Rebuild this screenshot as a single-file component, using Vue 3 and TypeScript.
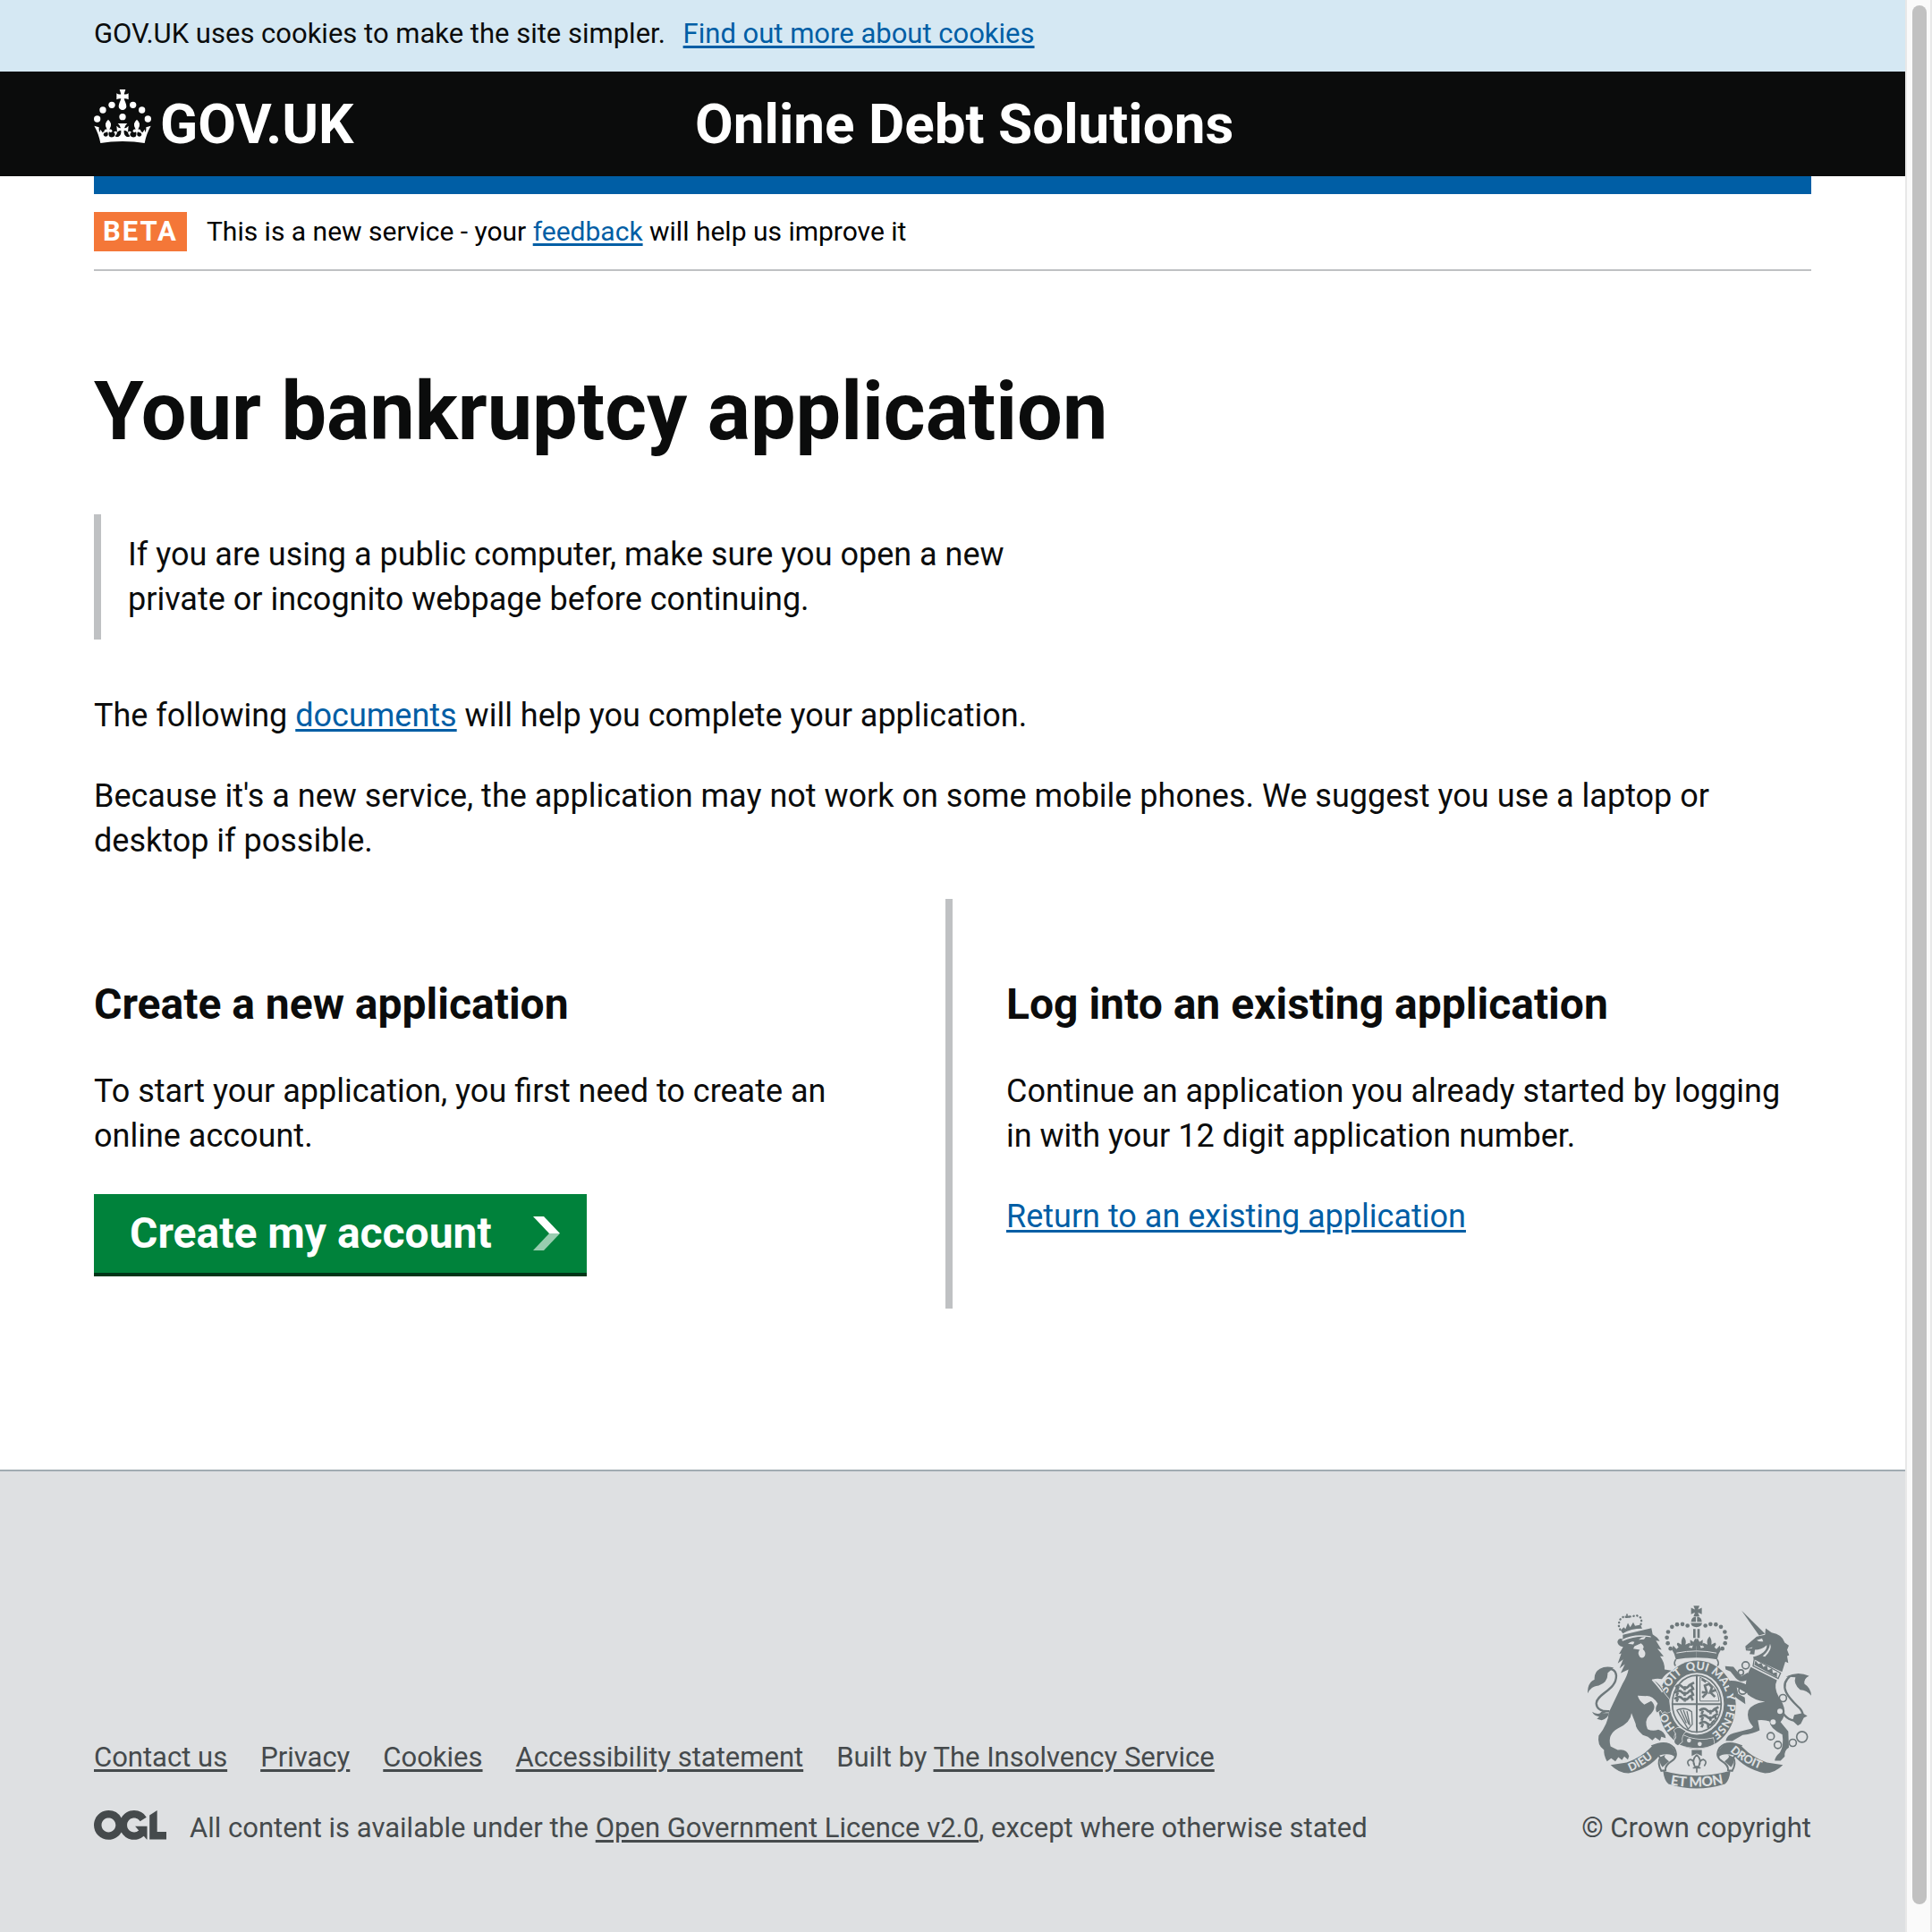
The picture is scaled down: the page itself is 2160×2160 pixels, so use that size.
<script setup lang="ts">
interface FooterLink {
  label: string
  href: string
}

interface Dot {
  x: number
  y: number
  r: number
}

const footerLinks: FooterLink[] = [
  { label: 'Contact us', href: '#contact' },
  { label: 'Privacy', href: '#privacy' },
  { label: 'Cookies', href: '#cookies' },
  { label: 'Accessibility statement', href: '#accessibility' },
]

// Pearls on the arches of the crown in the coat of arms (left half, mirrored for the right)
const pearls: Dot[] = [
  { x: 323, y: 188, r: 7 },
  { x: 314, y: 170, r: 7 },
  { x: 311, y: 151, r: 7 },
  { x: 315, y: 132, r: 7 },
  { x: 328, y: 115, r: 7 },
  { x: 345, y: 107, r: 7 },
  { x: 363, y: 106, r: 7 },
  { x: 380, y: 111, r: 7 },
]

const chainRings: Dot[] = [
  { x: 575, y: 244, r: 12 },
  { x: 559, y: 268, r: 9 },
  { x: 565, y: 328, r: 13 },
  { x: 700, y: 354, r: 12 },
  { x: 659, y: 482, r: 12 },
  { x: 683, y: 511, r: 12 },
  { x: 733, y: 504, r: 12 },
  { x: 764, y: 484, r: 18 },
]
</script>

<template>
  <div class="window">
    <div class="page">
      <div class="cookie-bar">
        <p class="container">
          GOV.UK uses cookies to make the site simpler.
          <a class="cookie-link" href="#cookies">Find out more about cookies</a>
        </p>
      </div>

      <header class="header">
        <div class="container header-grid">
          <a class="brand" href="#home">
            <svg class="brand-crown" viewBox="45 30 192 180" aria-hidden="true">
              <path d="M131 30H151L146 46Q154 48 161 43V64Q154 59 146 61C149 71 154 79 154 87A13 12 0 0 1 128 87C128 79 133 71 136 61Q128 59 121 64V43Q128 48 136 46Z" />
              <circle cx="75" cy="99" r="11" />
              <circle cx="105" cy="82" r="11" />
              <circle cx="176" cy="82" r="11" />
              <circle cx="206" cy="99" r="11" />
              <circle cx="56" cy="129" r="11" />
              <circle cx="226" cy="129" r="11" />
              <circle cx="141" cy="122" r="11" />
              <g id="crown-half">
                <path d="M141 204Q100 204 67 210Q61 178 46 152L62 157Q60 167 65 174L67 164L74 175Q81 168 86 174Q77 174 77 183Q81 190 89 187Q95 183 90 172Q85 176 79 171Q80 162 89 164Q82 153 84 145Q87 136 93 131Q99 136 102 145Q104 153 97 164Q106 162 107 171Q101 176 96 172Q92 182 98 189Q109 193 115 185Q118 177 111 174Q117 167 123 173L121 152Q128 160 135 160Q134 151 125 144H141Z" />
              </g>
              <use href="#crown-half" transform="translate(282 0) scale(-1 1)" />
              <path class="cutout" d="M123 173Q129 167 136 167Q138 182 128 188Q119 191 116 187Q122 182 123 173ZM159 173Q153 167 146 167Q144 182 154 188Q163 191 166 187Q160 182 159 173Z" />
            </svg>
            <span>GOV.UK</span>
          </a>
          <a class="service-name" href="#service">Online Debt Solutions</a>
        </div>
      </header>

      <div class="container">
        <div class="blue-bar"></div>
        <div class="phase">
          <strong class="phase-tag">BETA</strong>
          <span>This is a new service - your <a href="#feedback">feedback</a> will help us improve it</span>
        </div>
      </div>

      <main class="container main">
        <h1>Your bankruptcy application</h1>
        <p class="inset">
          If you are using a public computer, make sure you open a new private or incognito webpage before
          continuing.
        </p>
        <p>The following <a href="#documents">documents</a> will help you complete your application.</p>
        <p>
          Because it's a new service, the application may not work on some mobile phones. We suggest you use a
          laptop or desktop if possible.
        </p>

        <div class="columns">
          <section class="column column-left">
            <h2>Create a new application</h2>
            <p>To start your application, you first need to create an online account.</p>
            <button type="button" class="start-button">
              Create my account
              <svg class="chevron" viewBox="0 0 30 38" aria-hidden="true">
                <path d="M0 0H12L30 19H18Z" fill="#fff" />
                <path d="M18 19H30L12 38H0Z" fill="#99cdb0" />
              </svg>
            </button>
          </section>
          <section class="column column-right">
            <h2>Log into an existing application</h2>
            <p>Continue an application you already started by logging in with your 12 digit application number.</p>
            <p><a href="#return">Return to an existing application</a></p>
          </section>
        </div>
      </main>

      <footer class="footer">
        <div class="container footer-row">
          <div class="footer-meta">
            <ul class="footer-links">
              <li v-for="link in footerLinks" :key="link.label">
                <a :href="link.href">{{ link.label }}</a>
              </li>
              <li>Built by <a href="#insolvency">The Insolvency Service</a></li>
            </ul>
            <div class="licence">
              <svg class="ogl" viewBox="0 0 483 196" role="img" aria-label="OGL">
                <path d="M421.5 142.8V.1l-50.7 32.3v161.1h112.4v-50.7zm-122.3-9.6A47.12 47.12 0 0 1 221 97.8c0-26 21.1-47.1 47.1-47.1 16.7 0 31.4 8.7 39.7 21.8l42.7-27.2A97.63 97.63 0 0 0 268.1 0c-36.5 0-68.3 20.1-85.1 49.7A98 98 0 0 0 97.8 0C43.9 0 0 43.9 0 97.8s43.9 97.8 97.8 97.8c36.5 0 68.3-20.1 85.1-49.7a97.76 97.76 0 0 0 149.6 25.4l19.4 22.2h3v-87.8h-80l24.3 27.5zM97.8 145c-26 0-47.1-21.1-47.1-47.1s21.1-47.1 47.1-47.1 47.1 21.1 47.1 47.1S123.8 145 97.8 145" />
              </svg>
              <p>
                All content is available under the <a href="#licence">Open Government Licence v2.0</a>, except
                where otherwise stated
              </p>
            </div>
          </div>

          <a class="copyright" href="#copyright">
            <svg class="arms" viewBox="45 44 750 614" aria-hidden="true">
              <defs>
                <path id="garter" d="M411 488C358 488 308 437 308 373C308 309 354 259 411 259C468 259 514 309 514 373C514 437 464 488 411 488" />
                <path id="scroll-left" d="M188 600Q242 578 296 526" />
                <path id="scroll-right" d="M522 532Q570 578 660 604" />
                <path id="scroll-mid" d="M322 644Q410 662 514 638" />
              </defs>

              <!-- crown -->
              <path d="M400 44H420L415 57L428 51V73L415 67L420 80H400L405 67L392 73V51L405 57Z" />
              <path d="M392 98Q393 82 408 81V98ZM412 81Q427 82 428 98H412ZM391 102H429Q426 116 410 116Q394 116 391 102Z" />
              <path d="M399 122H407V152H399ZM413 122H421V152H413Z" />
              <g id="arms-crown-half">
                <circle v-for="(p, i) in pearls" :key="i" :cx="p.x" :cy="p.y" :r="p.r" />
                <path d="M410 218Q370 218 341 224Q338 206 328 192L332 178L343 190L350 183Q340 172 348 168L360 175Q357 160 366 147Q378 160 373 175L386 169Q393 174 384 184L395 187L398 177L389 180V158L400 166L405 155H410Z" />
                <circle cx="410" cy="170" r="9" />
              </g>
              <use href="#arms-crown-half" transform="translate(820 0) scale(-1 1)" />
              <path class="line-light" d="M343 203Q410 189 477 203" stroke-width="3" />
              <path class="line" d="M341 224Q332 238 340 246M479 224Q488 238 480 246" stroke-width="5" />

              <!-- garter and shield -->
              <ellipse cx="412" cy="376" rx="130" ry="148" />
              <ellipse class="light" cx="411" cy="373" rx="91" ry="104" />
              <ellipse class="line" cx="411" cy="373" rx="82" ry="95" stroke-width="5" />
              <path class="line" d="M411 276V470M328 374H494" stroke-width="6" />
              <g class="line" stroke-width="8">
                <path d="M340 318Q352 305 362 316T386 312M384 312L402 302M350 316L345 328M372 314L370 328M392 310L398 322" />
                <path d="M336 337Q352 324 362 335T386 331M384 331L402 321M348 335L343 347M372 333L370 347M392 329L398 341" />
                <path d="M336 357Q352 344 362 355T386 351M384 351L402 341M348 355L343 366M372 353L370 366M392 349L398 362" />
                <path d="M420 396Q434 384 446 395T470 391L484 384M432 396L427 408M454 394L458 408M474 392L480 403" />
                <path d="M420 418Q434 406 446 417T470 413L482 406M432 418L427 430M454 416L458 430M472 414L476 426" />
                <path d="M420 440Q434 428 446 439T464 435L472 428M432 440L427 452M448 438L450 454" />
                <path d="M430 352L445 336L438 312L452 306L462 318L456 334L476 326M456 334L472 350M445 336L428 334M442 300L428 290" />
              </g>
              <path class="line" d="M422 284V364H486Q484 312 422 284" stroke-width="3" />
              <path class="line" d="M344 394Q372 382 394 400L396 442L382 458L344 394M356 394L376 438M366 394L384 442M378 398L388 446" stroke-width="4" />
              <text class="motto"><textPath href="#garter" startOffset="12%">HO</textPath></text>
              <text class="motto"><textPath href="#garter" startOffset="30%">SOIT</textPath></text>
              <text class="motto"><textPath href="#garter" startOffset="45%">QUI</textPath></text>
              <text class="motto"><textPath href="#garter" startOffset="57%">MAL</textPath></text>
              <text class="motto"><textPath href="#garter" startOffset="70%">Y</textPath></text>
              <text class="motto"><textPath href="#garter" startOffset="75%">PENSE</textPath></text>
              <path class="edge" d="M344 466Q400 505 466 488L470 508Q420 536 342 506Q330 484 344 466Z" />
              <path class="edge" d="M340 470Q330 462 342 456Q352 450 362 458L374 466Q358 480 362 500L348 512Q332 506 338 492Q346 484 340 470Z" />
              <circle class="light" cx="385" cy="496" r="7" />
              <circle class="light" cx="421" cy="508" r="7" />

              <!-- lion -->
              <path class="edge" d="M163 142L240 124L259 119L263 140Q278 148 287 163L274 161L293 192L279 188L300 214L288 214Q304 235 303 258L326 262Q305 274 294 290Q276 286 262 292Q292 308 302 338L318 358L323 398Q310 408 304 398L296 404L290 394L278 402Q268 392 280 372Q262 345 240 347L213 346Q216 362 235 376L258 364Q282 385 252 412Q234 430 246 458Q262 466 282 460Q306 468 307 488L292 484L288 497L272 486L262 496L247 484L230 478Q205 455 206 440L192 404Q190 435 146 456Q110 476 122 516L146 528Q176 522 184 548L180 560L168 550L160 562L148 552L138 566L124 556L110 566Q98 545 100 528Q76 512 82 480Q114 440 116 402Q140 352 162 306Q178 280 182 258L156 270L170 240L152 254L164 224L146 238L158 204L150 206L164 182Q144 178 145 164Q150 150 163 156Z" />
              <path class="light" d="M160 158Q200 136 256 146L258 150Q210 142 162 163ZM180 172Q192 160 202 166L198 174ZM216 158Q230 146 240 149L234 157ZM202 180L224 170Q238 180 230 190Q242 200 237 212Q230 224 220 216Q210 202 220 192L198 188Z" />
              <path class="line-light" d="M262 292Q286 318 296 334" stroke-width="5" />
              <path d="M156 127L166 116L172 122L180 102L188 116L198 100L204 112L222 108L228 121Q190 121 163 137Z" />
              <path class="dots" d="M154 124L149 110L152 92L164 82L178 82L192 80L210 77L223 84L226 98L222 112" />
              <path d="M174 72H180L179 78H186V85H170V78L175 79Z" />
              <path class="line" d="M118 398Q76 400 74 372C76 338 142 328 141 278Q138 252 106 257M118 398Q94 398 88 408" stroke-width="7" />
              <path d="M132 252Q106 244 86 256Q66 268 68 292Q44 302 45 338Q56 314 82 312Q114 300 112 270ZM60 400Q72 410 92 404L116 404Q114 422 92 428L76 424L84 416Q66 414 60 400Z" />

              <!-- unicorn -->
              <path d="M561 60L640 138L620 144Z" />
              <path d="M612 148L640 142L642 120L662 134Q698 140 706 168L720 178L714 192L721 210L714 213L718 236L708 232L697 266L602 222L600 216Q646 204 646 176Q628 192 606 192L604 208L588 206L592 196L576 194L574 180Z" />
              <path class="light" d="M612 160L630 154L634 164Q620 166 612 160ZM657 172Q666 190 640 215L632 213Q654 196 657 172ZM578 190L598 183L596 187Z" />
              <path class="line" d="M604 222L692 270L684 288L600 246Z" stroke-width="4" />
              <path d="M604 242L608 228L618 240L628 236L634 250L646 244L650 260L664 254L666 270L680 268L680 284Z" />
              <path d="M592 250L680 294Q668 318 686 350Q722 400 692 434L718 466L720 520Q704 530 706 550L692 564H673Q672 552 690 536Q704 514 698 476Q656 456 655 432Q640 426 616 428L622 462Q600 474 565 478L530 498L508 497Q512 478 534 472L580 460Q596 458 600 450Q576 424 584 396Q592 374 640 366Q606 362 582 342L574 322L579 280Z" />
              <path d="M582 292Q560 306 542 287L524 265L508 258L506 247L534 249L548 266L560 281L583 268ZM580 310Q550 294 520 296L519 314L530 322L535 346L550 358L574 374L572 352L550 340L545 318L580 338Z" />
              <path class="line" d="M696 396C720 450 790 430 758 390C730 362 678 318 724 280" stroke-width="7" />
              <path d="M710 282Q750 262 788 280Q770 288 772 306Q794 320 795 346Q780 326 758 326Q734 306 742 284ZM738 410L766 404L782 414L770 420L760 440L750 446L732 430Z" />
              <circle v-for="(c, i) in chainRings" :key="i" class="ring" :cx="c.x" :cy="c.y" :r="c.r" />
              <circle class="light" cx="690" cy="398" r="9" />
              <circle class="light" cx="667" cy="434" r="9" />

              <!-- scroll and fleur-de-lis -->
              <g id="scroll-half">
                <path class="fold" d="M262 514Q310 494 334 520Q352 550 326 566Q304 580 306 596L292 598Q278 572 288 554Z" />
                <path d="M122 578L176 570Q226 552 258 518Q296 494 322 512Q344 528 338 552Q322 536 286 546Q250 592 182 606Q150 606 122 578Z" />
                <path d="M288 552Q284 572 296 586L318 566Q296 552 306 544Z" />
              </g>
              <use href="#scroll-half" transform="translate(822 0) scale(-1 1)" />
              <path d="M298 598Q410 630 524 598Q520 632 506 642Q410 672 316 642Q302 632 298 598Z" />
              <text class="motto"><textPath href="#scroll-left">DIEU</textPath></text>
              <text class="motto"><textPath href="#scroll-right">DROIT</textPath></text>
              <text class="motto motto-large"><textPath href="#scroll-mid">ET MON</textPath></text>
              <path d="M394 528H428V548L411 540L394 548Z" />
              <path class="line" d="M411 544Q392 562 405 584H417Q430 562 411 544M404 584Q402 560 388 560Q374 566 386 582M418 584Q420 560 434 560Q448 566 436 582M398 588H424M411 588V604" stroke-width="5" />
            </svg>
            <span>© Crown copyright</span>
          </a>
        </div>
      </footer>
    </div>

    <div class="scroll-track" aria-hidden="true">
      <div class="scroll-thumb"></div>
    </div>
  </div>
</template>

<style>
body {
  margin: 0;
  background: #fff;
}
</style>

<style scoped>
.window {
  display: flex;
  min-height: 100vh;
  font-family: Roboto, 'Liberation Sans', sans-serif;
  font-size: 36px;
  line-height: 50px;
  color: #0b0c0c;
}

.page {
  flex: 1;
  min-width: 0;
  display: flex;
  flex-direction: column;
}

.container {
  box-sizing: border-box;
  width: calc(100% - 120px);
  max-width: 1920px;
  margin: 0 auto;
}

p,
h1,
h2,
ul {
  margin: 0;
}

a {
  color: #005ea5;
  text-decoration-thickness: 3px;
  text-underline-offset: 3px;
}

.cookie-bar {
  padding: 18px 0 22px;
  background: #d5e8f3;
  font-size: 31px;
  line-height: 40px;
}

.cookie-bar .container {
  color: #0b0c0c;
}

.cookie-link {
  margin-left: 12px;
}

.header {
  background: #0b0c0c;
}

.header-grid {
  display: grid;
  grid-template-columns: 35% 1fr;
  padding: 20px 0 19px;
  font-weight: 700;
  font-size: 62px;
  line-height: 78px;
}

.header a {
  color: #fff;
  text-decoration: none;
}

.brand {
  display: flex;
  gap: 10px;
}

.brand-crown {
  width: 64px;
  height: 60px;
  fill: #fff;
}

.cutout {
  fill: #0b0c0c;
}

.blue-bar {
  height: 20px;
  background: #005ea5;
}

.phase {
  display: flex;
  align-items: center;
  gap: 22px;
  padding: 20px 0;
  border-bottom: 2px solid #bfc1c3;
  font-size: 30px;
  line-height: 44px;
  color: #000;
}

.phase-tag {
  padding: 0 10px;
  background: #f47738;
  color: #fff;
  font-size: 31px;
  letter-spacing: 2px;
}

.main {
  padding: 100px 0 180px;
}

h1 {
  margin-bottom: 56px;
  font-size: 90px;
  line-height: 116px;
}

.main p {
  margin-bottom: 40px;
}

.main .inset {
  box-sizing: border-box;
  max-width: 1080px;
  margin-bottom: 60px;
  padding: 20px 0 20px 30px;
  border-left: 8px solid #bfc1c3;
}

.columns {
  display: grid;
  grid-template-columns: 1fr 1fr;
}

.column {
  padding-top: 88px;
}

.column-left {
  padding-right: 60px;
  padding-bottom: 36px;
  border-right: 8px solid #bfc1c3;
}

.column-right {
  padding-left: 60px;
}

h2 {
  margin-bottom: 42px;
  font-size: 48px;
  line-height: 60px;
}

.start-button {
  display: flex;
  align-items: center;
  gap: 46px;
  padding: 12px 30px 16px 40px;
  border: 0;
  background: #00823b;
  box-shadow: inset 0 -4px 0 #003618;
  color: #fff;
  font: inherit;
  font-size: 48px;
  font-weight: 700;
  line-height: 64px;
}

.chevron {
  width: 30px;
  height: 38px;
}

.footer {
  flex: 1;
  padding: 150px 0 90px;
  border-top: 2px solid #a1acb2;
  background: #dee0e2;
  color: #454a4c;
  font-size: 31px;
  line-height: 40px;
}

.footer a {
  color: #454a4c;
}

.footer-row {
  display: flex;
  justify-content: space-between;
  align-items: flex-end;
}

.footer-links {
  display: flex;
  gap: 37px;
  margin-bottom: 39px;
  padding: 0;
  list-style: none;
}

.licence {
  display: flex;
  gap: 26px;
}

.ogl {
  width: 81px;
  height: 33px;
  fill: #454a4c;
}

.footer .copyright {
  display: flex;
  flex-direction: column;
  align-items: flex-end;
  gap: 24px;
  text-decoration: none;
}

.arms {
  width: 250px;
  height: 205px;
  fill: #6e787b;
}

.arms .light {
  fill: #dee0e2;
}

.arms .line {
  fill: none;
  stroke: #6e787b;
}

.arms .line-light {
  fill: none;
  stroke: #dee0e2;
}

.arms .edge {
  stroke: #dee0e2;
  stroke-width: 4;
  paint-order: stroke;
}

.arms .fold {
  fill: #dee0e2;
  stroke: #6e787b;
  stroke-width: 6;
}

.arms .ring {
  fill: none;
  stroke: #6e787b;
  stroke-width: 5;
}

.arms .dots {
  fill: none;
  stroke: #6e787b;
  stroke-width: 7;
  stroke-linecap: round;
  stroke-dasharray: 1 11;
}

.motto {
  font-family: Lato, sans-serif;
  font-weight: 900;
  font-size: 38px;
  fill: #dee0e2;
}

.motto-large {
  font-size: 46px;
}

.scroll-track {
  position: sticky;
  top: 0;
  box-sizing: border-box;
  width: 30px;
  height: 100vh;
  padding: 6px 4px 31px 6px;
  border: solid #e8e8e8;
  border-width: 0 2px;
  background: #fafafa;
}

.scroll-thumb {
  height: 100%;
  border-radius: 8px;
  background: #c1c1c1;
}
</style>
